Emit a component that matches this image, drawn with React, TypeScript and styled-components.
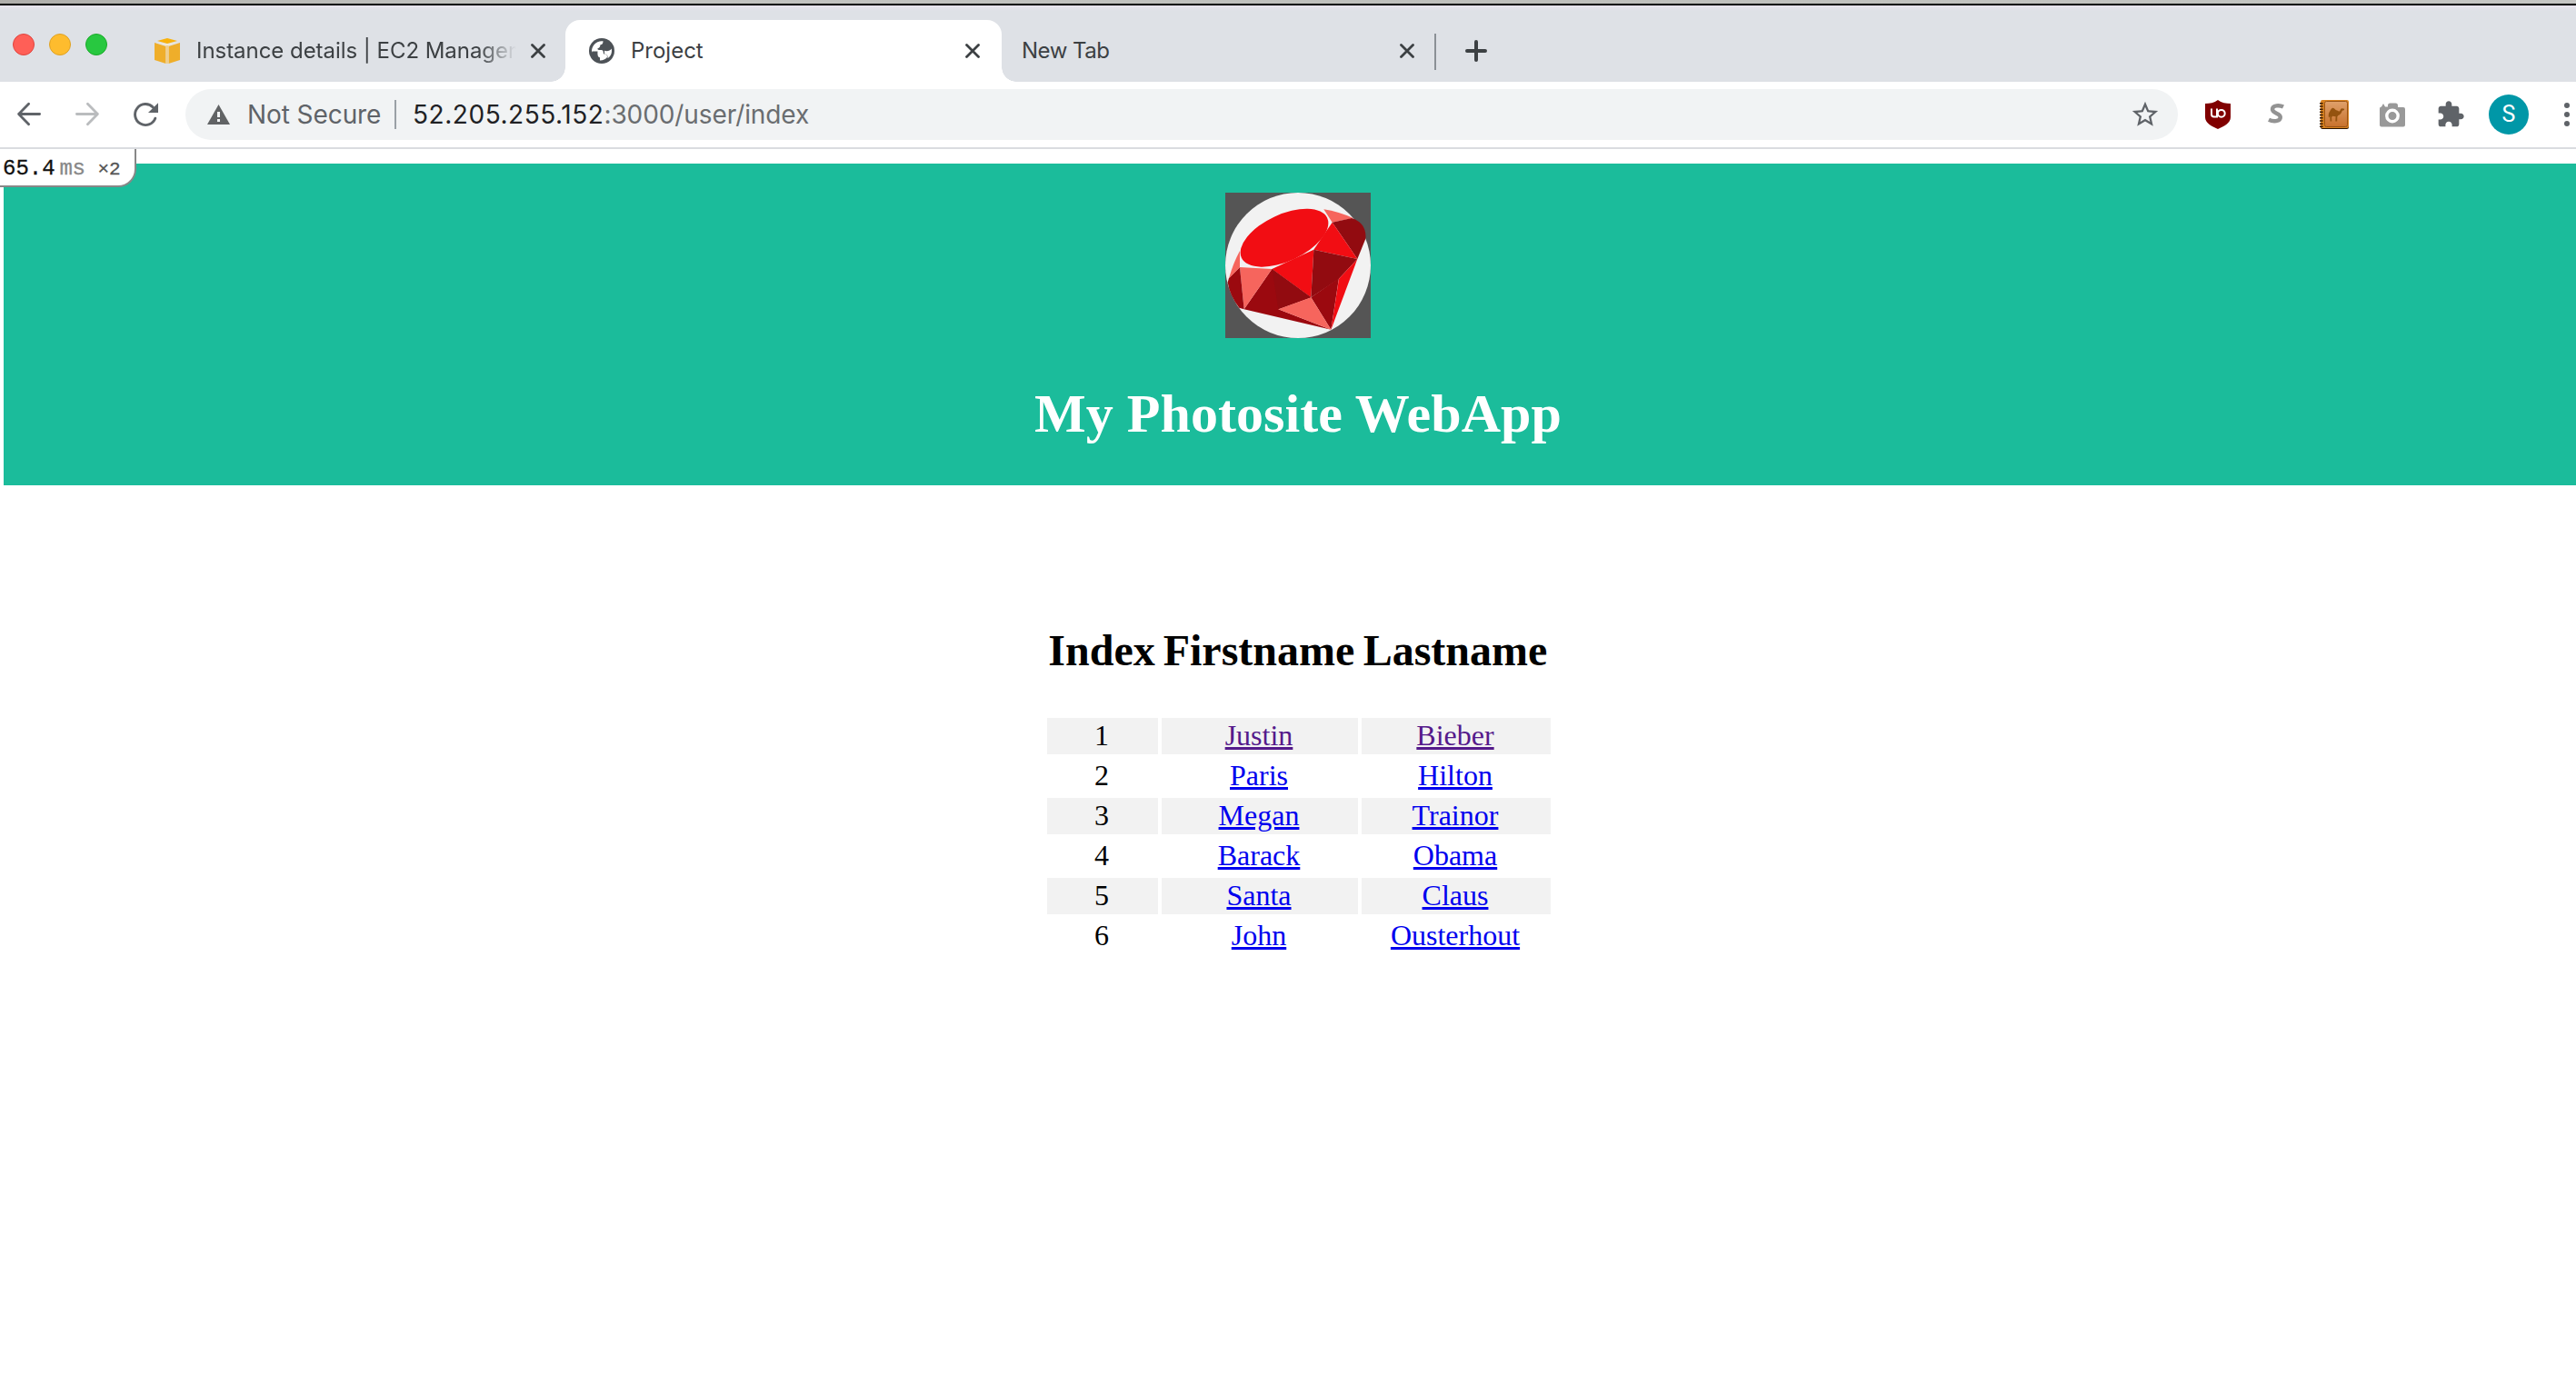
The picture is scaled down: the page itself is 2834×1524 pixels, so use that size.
import React from 'react';
import styled, { createGlobalStyle } from 'styled-components';

const Global = createGlobalStyle`
  html, body { margin: 0; padding: 0; background: #fff; }
  body { overflow: hidden; }
  * { box-sizing: border-box; }
`;

const UI_FONT = `Inter, Roboto, "Liberation Sans", sans-serif`;

const Window = styled.div`
  width: 2834px;
  height: 1524px;
  overflow: hidden;
  display: flex;
  flex-direction: column;
  background: #fff;
`;

const DesktopEdge = styled.div`
  height: 6px;
  flex: none;
  background: linear-gradient(90deg, #b0aeab, #c4c4c2 20%, #bfbfbc 60%, #c6c6c4);
  border-bottom: 2px solid #000;
`;

const TabStrip = styled.div`
  height: 84px;
  flex: none;
  display: flex;
  align-items: flex-end;
  background: linear-gradient(#e9e4ee 0, #dee1e6 6px);
`;

const Lights = styled.div`
  display: flex;
  gap: 16px;
  width: 146px;
  padding-left: 14px;
  height: 55px;
  align-self: flex-start;
  align-items: flex-end;
`;

const Light = styled.span<{ $fill: string; $edge: string }>`
  width: 24px;
  height: 24px;
  border-radius: 50%;
  background: ${(p) => p.$fill};
  border: 1px solid ${(p) => p.$edge};
`;

const Tab = styled.div<{ $active?: boolean; $width: number; $left: number; $right: number }>`
  position: relative;
  width: ${(p) => p.$width}px;
  height: 68px;
  padding: 0 ${(p) => p.$right}px 0 ${(p) => p.$left}px;
  display: flex;
  align-items: center;
  background: ${(p) => (p.$active ? '#fff' : 'transparent')};
  border-radius: 16px 16px 0 0;
  font: 400 24px/32px ${UI_FONT};
  color: #3c4043;
  &::before, &::after {
    content: '';
    display: ${(p) => (p.$active ? 'block' : 'none')};
    position: absolute;
    bottom: 0;
    width: 16px;
    height: 16px;
  }
  &::before { left: -16px; background: radial-gradient(circle at 0 0, transparent 15.5px, #fff 16px); }
  &::after { right: -16px; background: radial-gradient(circle at 100% 0, transparent 15.5px, #fff 16px); }
  svg { flex: none; }
`;

const TabTitle = styled.span<{ $fade?: boolean; $gap: number; $spacing: number }>`
  flex: 1;
  min-width: 0;
  margin-left: ${(p) => p.$gap}px;
  margin-right: ${(p) => (p.$fade ? 16 : 0)}px;
  overflow: hidden;
  white-space: nowrap;
  letter-spacing: ${(p) => p.$spacing}px;
  ${(p) => p.$fade && 'mask-image: linear-gradient(90deg, #000 calc(100% - 42px), transparent);'}
`;

const TabDivider = styled.span`
  width: 2px;
  height: 40px;
  margin-bottom: 13px;
  background: #8b9096;
`;

const NewTab = styled.span`
  display: flex;
  margin: 0 0 22px 32px;
`;

const Toolbar = styled.div`
  height: 74px;
  flex: none;
  display: flex;
  align-items: center;
  border-bottom: 2px solid #dadce0;
  background: #fff;
`;

const NavButtons = styled.div`
  display: flex;
  width: 204px;
  padding-left: 16px;
  gap: 32px;
  svg { flex: none; }
`;

const Omnibox = styled.div`
  width: 2192px;
  height: 56px;
  border-radius: 28px;
  background: #f1f3f4;
  display: flex;
  align-items: center;
  padding: 0 19px 0 24px;
  font: 400 28px/40px ${UI_FONT};
  color: #5f6368;
  svg { flex: none; }
`;

const NotSecure = styled.span`
  width: 162px;
  margin-left: 19px;
  white-space: nowrap;
  letter-spacing: -0.08px;
`;

const OmniDivider = styled.span`
  width: 2px;
  height: 32px;
  background: #9aa0a6;
`;

const Url = styled.span`
  flex: 1;
  margin-left: 18px;
  white-space: nowrap;
  letter-spacing: -0.1px;
  color: #6a6d70;
  b { font-weight: 400; letter-spacing: 0.55px; color: #202124; }
`;

const Extensions = styled.div`
  display: flex;
  align-items: center;
  padding-left: 28px;
  gap: 32px;
  svg { flex: none; }
`;

const Avatar = styled.span`
  width: 44px;
  height: 44px;
  margin: 0 7px 0 -6px;
  border-radius: 50%;
  background: #0097a7;
  color: #fff;
  font: 400 25px/44px Roboto, sans-serif;
  text-align: center;
`;

const Page = styled.main`
  flex: 1;
  position: relative;
  padding: 16px 0 0 4px;
  overflow: hidden;
  font-family: "Liberation Serif", "Times New Roman", serif;
`;

const Profiler = styled.div`
  position: absolute;
  left: 0;
  top: 0;
  width: 150px;
  height: 42px;
  padding: 2px 0 0 3px;
  display: flex;
  align-items: baseline;
  background: #fff;
  border: solid #888;
  border-width: 0 2px 2px 0;
  border-radius: 0 0 20px 0;
  font: 400 24px/40px "Liberation Mono", monospace;
  color: #111;
  -webkit-text-stroke: 0.3px currentColor;
  white-space: nowrap;
`;

const Unit = styled.span`
  margin-left: 5px;
  letter-spacing: -0.5px;
  color: #888;
`;

const Times = styled.span`
  margin-left: 14px;
  font-size: 21px;
  color: #555;
`;

const Banner = styled.header`
  width: 2848px;
  height: 354px;
  padding-top: 32px;
  display: flex;
  flex-direction: column;
  align-items: center;
  background: #1bbc9b;
`;

const Title = styled.h1`
  margin: 46px 0 0;
  font-size: 60px;
  line-height: 74px;
  font-weight: 700;
  letter-spacing: 0.05px;
  color: #fff;
`;

const Listing = styled.section`
  width: 2850px;
  display: flex;
  justify-content: center;
  padding-top: 152px;
`;

const Table = styled.table`
  width: 562px;
  table-layout: fixed;
  border-spacing: 4px;
  text-align: center;
  font-size: 32px;
  line-height: 36px;
`;

const Head = styled.th<{ $width: number }>`
  width: ${(p) => p.$width}px;
  height: 96px;
  padding: 0 2px 0 0;
  vertical-align: top;
  font-size: 48px;
  line-height: 52px;
  font-weight: 700;
  white-space: nowrap;
`;

const Row = styled.tr<{ $shaded: boolean }>`
  td { background: ${(p) => (p.$shaded ? '#f2f2f2' : '#fff')}; }
`;

const Cell = styled.td`
  height: 40px;
  padding: 1px 3px 3px 1px;
`;

const Link = styled.a<{ $visited: boolean }>`
  color: ${(p) => (p.$visited ? '#551a8b' : '#0000ee')};
  text-decoration: underline;
`;

const CloseIcon = () => (
  <svg width="16" height="16" viewBox="0 0 16 16">
    <path d="M1.5 1.5l13 13M14.5 1.5l-13 13" stroke="#3c4043" strokeWidth="2.8" strokeLinecap="round" />
  </svg>
);

const AwsIcon = () => (
  <svg width="28" height="28" viewBox="0 0 28 28">
    <path d="M14 0l11 3L14 6 3 3z" fill="#f9b20c" />
    <path d="M0 5l12.500 4v19L0 24z" fill="#efae2a" />
    <path d="M28 5l-12.500 4v19L28 24z" fill="#efae2a" />
    <path d="M1 4.500L14 8l13-3.500L14 6.500z" fill="#fbeccb" />
    <path d="M14 8V28" stroke="#f0cf8e" strokeWidth="3" />
  </svg>
);

const GlobeIcon = () => (
  <svg width="28" height="28" viewBox="0 0 28 28">
    <circle cx="14" cy="14" r="14" fill="#4d5257" />
    <path d="M15.500 3.200C15.500 6 14.500 7 12.500 7.200c-.3 2.300-1 3.600-3 4.100-.2 1 .3 1.700 1.500 1.700h2.500c1.700 0 2.300 1 2.300 2.700 0 1.300.4 1.800 1.700 1.800 2 0 2.500 1 2.500 3.500-2 2.300-4.500 3.600-8 3.500v-3c-1.500-.5-2.700-1.700-2.700-3.500 0-2-1-2.700-3-2.700H3C2.500 9 7.500 2.500 15.500 3.200z" fill="#fff" />
    <path d="M9.500 14.500H3.300c.2 3 1.700 6 4.200 8l4.500 2.300v-3c-1.500-.5-2.700-1.700-2.700-3.500z" fill="#4d5257" />
    <path d="M17 13.700c3 1 6 .3 7.800-2.200.8 4.500-.8 8.500-4.300 10.500.2-3.500-1-4.500-3.500-4.500z" fill="#fff" />
  </svg>
);

const gem = {
  bright: '#f20d13',
  dark: '#9b090f',
  deep: '#920b10',
  pale: '#f6655d',
};

const RubyLogo = () => (
  <svg width="160" height="160" viewBox="0 0 480 480">
    <rect width="480" height="480" fill="#555" />
    <circle cx="240" cy="240" r="240" fill="#f2f2f2" />
    <ellipse cx="195" cy="149" rx="156" ry="77" transform="rotate(-25 195 149)" fill={gem.bright} />
    <path d="M325 55Q375 63 422 84L353 98Z" fill={gem.pale} />
    <path d="M353 98L418 84C450 95 466 118 463 152L436 219Z" fill={gem.deep} />
    <path d="M353 98L436 219L292 188Z" fill={gem.bright} />
    <path d="M292 188L154 252L283 346Z" fill={gem.bright} />
    <path d="M292 188L436 219L375 284L283 346Z" fill={gem.deep} />
    <path d="M375 282L283 346L349 452Z" fill={gem.dark} />
    <path d="M436 219L375 284L349 452Z" fill={gem.bright} />
    <path d="M154 252L283 346L175 385L349 452L62 385Z" fill={gem.dark} />
    <path d="M154 252L283 346L175 385Z" fill={gem.deep} />
    <path d="M283 346L175 385L349 452Z" fill={gem.pale} />
    <path d="M48 246L154 252L62 385Z" fill={gem.pale} />
    <path d="M48 246L62 385L46 380Q15 340 8 296L12 282Z" fill={gem.dark} />
    <path d="M48 192L48 246L12 283Q25 235 48 192Z" fill={gem.pale} />
  </svg>
);

const BackIcon = ({ color }: { color: string }) => (
  <svg width="32" height="32" viewBox="0 0 32 32" fill="none" stroke={color} strokeWidth="2.8" strokeLinecap="round" strokeLinejoin="round">
    <path d="M27.600 15.500H4.600M15.600 4.300L4.600 15.500l11 11.200" />
  </svg>
);

const ForwardIcon = ({ color }: { color: string }) => (
  <svg width="32" height="32" viewBox="0 0 32 32" fill="none" stroke={color} strokeWidth="2.8" strokeLinecap="round" strokeLinejoin="round">
    <path d="M4.400 15.500h23M16.400 4.300l11 11.200-11 11.200" />
  </svg>
);

const ReloadIcon = () => (
  <svg width="32" height="32" viewBox="0 0 32 32">
    <path d="M26.800 20.200A11.500 11.500 0 1 1 24.300 8" fill="none" stroke="#5f6368" strokeWidth="2.9" strokeLinecap="round" />
    <path d="M30 3.300v10.700H19z" fill="#5f6368" />
  </svg>
);

const WarningIcon = () => (
  <svg width="25" height="22" viewBox="0 0 25 22">
    <path d="M12.500 0L25 22H0z" fill="#616365" />
    <path d="M11 8h3v6h-3zM11 16h3v3h-3z" fill="#f1f3f4" />
  </svg>
);

const StarIcon = () => (
  <svg width="34" height="34" viewBox="0 0 24 24">
    <path d="M22 9.240l-7.190-.620L12 2 9.190 8.630 2 9.240l5.460 4.730L5.820 21 12 17.270 18.180 21l-1.630-7.030L22 9.240zM12 15.400l-3.760 2.270 1-4.280-3.320-2.880 4.380-.380L12 6.100l1.710 4.040 4.380.380-3.320 2.880 1 4.280L12 15.400z" fill="#5f6368" />
  </svg>
);

const ShieldIcon = () => (
  <svg width="32" height="32" viewBox="0 0 32 32">
    <path d="M16 0c4 3 9 4 14 4v15c0 6-7 10-14 13C9 29 2 25 2 19V4c5 0 10-1 14-4z" fill="#800000" />
    <path d="M9 9.500v6.300q0 2.700 2.700 2.700h3.300V9.500" fill="none" stroke="#fff" strokeWidth="2" />
    <circle cx="19.800" cy="14.800" r="3.900" fill="none" stroke="#fff" strokeWidth="2" />
  </svg>
);

const StylusIcon = () => (
  <svg width="32" height="32" viewBox="0 0 32 32">
    <path d="M24 7.500c-4-2-12-2-12 2.800 0 4.700 8.800 4.200 8.800 8.700 0 5-8.300 5-12.800 2.800" fill="none" stroke="#939393" strokeWidth="4.400" />
  </svg>
);

const BookIcon = () => (
  <svg width="32" height="32" viewBox="0 0 32 32">
    <defs>
      <linearGradient id="cover" x1="0" y1="0" x2="0" y2="1">
        <stop offset="0" stopColor="#dfa06a" />
        <stop offset="1" stopColor="#c8722c" />
      </linearGradient>
    </defs>
    <rect x="1" y="2" width="31" height="30" rx="2" fill="#2b1400" />
    <rect x="1" y="0" width="31" height="31" rx="2" fill="#d9821f" />
    <rect x="5.500" y="1.500" width="25" height="28" rx="2" fill="url(#cover)" stroke="#9a5414" strokeWidth="1" />
    <path d="M1.800 3v27" stroke="#3a1d05" strokeWidth="3.600" strokeDasharray="1.500 1.700" />
    <path d="M10 19.500c-.6-3-.3-5 1.200-7 1-2 2.300-3.700 3.500-3.700 1.600 0 2.300 2.500 4.300 2.700 1.500.2 2 1.700 3 .700 1-1 .800-2.700 2.300-3l2.900.600-.4 1.500-2 .500c-.8 2.500-1.800 4.500-4.500 5.200l-1 1.500-.1 5h-1.900l.3-5.200-3.600-.6-.9 1.600.2 4.200h-1.700l-.3-5.500z" fill="#94530f" />
  </svg>
);

const CameraIcon = () => (
  <svg width="32" height="32" viewBox="0 0 32 32">
    <path d="M4 7.500l2-3.500 2 3.500h3V6q0-2.500 2.500-2.500h6q2.500 0 2.500 2.500v2h6q2 0 2 2v17.500q0 2-2 2H4q-2 0-2-2V9.500q0-2 2-2z" fill="#999" />
    <circle cx="16" cy="17.500" r="6.200" fill="#999" stroke="#fff" strokeWidth="3.400" />
  </svg>
);

const PuzzleIcon = () => (
  <svg width="32" height="32" viewBox="0 0 24 24">
    <path d="M20.500 11H19V7c0-1.100-.9-2-2-2h-4V3.500C13 2.120 11.880 1 10.500 1S8 2.120 8 3.500V5H4c-1.100 0-1.990.9-1.990 2v3.800H3.500c1.490 0 2.700 1.210 2.700 2.700s-1.210 2.700-2.700 2.700H2V20c0 1.100.9 2 2 2h3.800v-1.500c0-1.490 1.210-2.700 2.700-2.700 1.490 0 2.700 1.210 2.700 2.700V22H17c1.100 0 2-.9 2-2v-4h1.500c1.380 0 2.500-1.120 2.500-2.500S21.880 11 20.500 11z" fill="#5f6368" />
  </svg>
);

const MenuIcon = () => (
  <svg width="6" height="32" viewBox="0 0 6 32" fill="#5f6368">
    <circle cx="3" cy="6" r="3" />
    <circle cx="3" cy="16" r="3" />
    <circle cx="3" cy="26" r="3" />
  </svg>
);

const people = [
  { first: 'Justin', last: 'Bieber', visited: true },
  { first: 'Paris', last: 'Hilton', visited: false },
  { first: 'Megan', last: 'Trainor', visited: false },
  { first: 'Barack', last: 'Obama', visited: false },
  { first: 'Santa', last: 'Claus', visited: false },
  { first: 'John', last: 'Ousterhout', visited: false },
];

export default function App() {
  return (
    <Window>
      <Global />
      <DesktopEdge />
      <TabStrip>
        <Lights>
          <Light $fill="#ff5f57" $edge="#e0443e" />
          <Light $fill="#febc2e" $edge="#dea123" />
          <Light $fill="#28c840" $edge="#1aab29" />
        </Lights>
        <Tab $width={476} $left={24} $right={22}>
          <AwsIcon />
          <TabTitle $gap={18} $spacing={-0.04} $fade>Instance details | EC2 Managem</TabTitle>
          <CloseIcon />
        </Tab>
        <Tab $active $width={480} $left={26} $right={24}>
          <GlobeIcon />
          <TabTitle $gap={18} $spacing={0}>Project</TabTitle>
          <CloseIcon />
        </Tab>
        <Tab $width={476} $left={22} $right={22}>
          <TabTitle $gap={0} $spacing={-0.5}>New Tab</TabTitle>
          <CloseIcon />
        </Tab>
        <TabDivider />
        <NewTab>
          <svg width="24" height="24" viewBox="0 0 24 24">
            <path d="M12 2v20M2 12h20" stroke="#3c4043" strokeWidth="4" strokeLinecap="round" />
          </svg>
        </NewTab>
      </TabStrip>
      <Toolbar>
        <NavButtons>
          <BackIcon color="#5f6368" />
          <ForwardIcon color="#babcbe" />
          <ReloadIcon />
        </NavButtons>
        <Omnibox>
          <WarningIcon />
          <NotSecure>Not Secure</NotSecure>
          <OmniDivider />
          <Url><b>52.205.255.152</b>:3000/user/index</Url>
          <StarIcon />
        </Omnibox>
        <Extensions>
          <ShieldIcon />
          <StylusIcon />
          <BookIcon />
          <CameraIcon />
          <PuzzleIcon />
          <Avatar>S</Avatar>
          <MenuIcon />
        </Extensions>
      </Toolbar>
      <Page>
        <Banner>
          <RubyLogo />
          <Title>My Photosite WebApp</Title>
        </Banner>
        <Listing>
          <Table>
            <thead>
              <tr>
                <Head $width={122}>Index</Head>
                <Head $width={216}>Firstname</Head>
                <Head $width={208}>Lastname</Head>
              </tr>
            </thead>
            <tbody>
              {people.map((person, i) => (
                <Row key={person.last} $shaded={i % 2 === 0}>
                  <Cell>{i + 1}</Cell>
                  <Cell><Link $visited={person.visited}>{person.first}</Link></Cell>
                  <Cell><Link $visited={person.visited}>{person.last}</Link></Cell>
                </Row>
              ))}
            </tbody>
          </Table>
        </Listing>
        <Profiler>65.4<Unit>ms</Unit><Times>×2</Times></Profiler>
      </Page>
    </Window>
  );
}
